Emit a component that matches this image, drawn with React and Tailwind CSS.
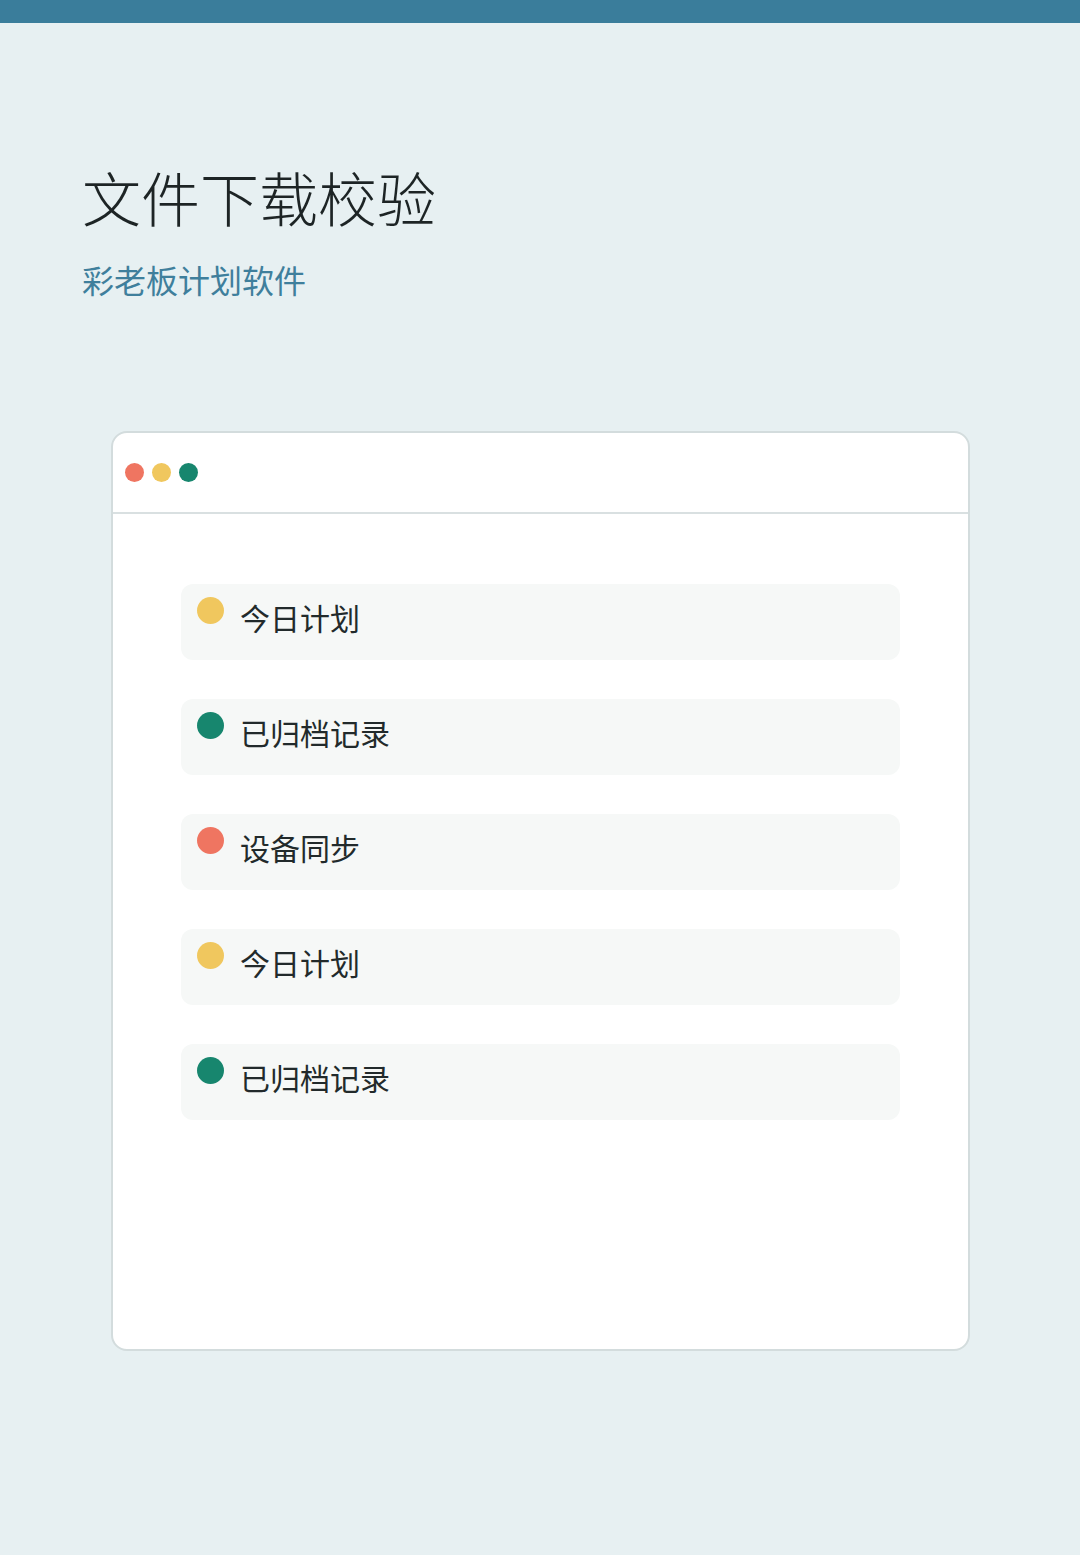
export default function App() {
  const items = [
    { c: "bg-[#f0c75e]", t: "今日计划" },
    { c: "bg-[#17866e]", t: "已归档记录" },
    { c: "bg-[#ef7561]", t: "设备同步" },
    { c: "bg-[#f0c75e]", t: "今日计划" },
    { c: "bg-[#17866e]", t: "已归档记录" },
  ];
  return (
    <div
      className="w-[1080px] h-[1555px] bg-[#e7f0f2] flex flex-col"
      style={{ fontFamily: '"Noto Sans CJK SC", "Noto Sans", sans-serif' }}
    >
      <div className="h-[23px] bg-[#3a7d9b] shrink-0" />
      <div className="pl-[82px] pt-[138px]">
        <h1 className="text-[59px] leading-[72px] text-[#1d2425] font-light m-0">文件下载校验</h1>
        <div className="mt-[22px] text-[32px] leading-[48px] text-[#3f7f9c]">彩老板计划软件</div>
      </div>
      <div className="ml-[111px] mt-[128px] w-[859px] h-[920px] bg-white border-2 border-[#d3dcdd] rounded-[16px] flex flex-col overflow-hidden">
        <div className="h-[81px] border-b-2 border-[#d9e0e1] flex items-center gap-[8px] pl-[12px] shrink-0">
          <span className="w-[19px] h-[19px] rounded-full bg-[#ef7561]" />
          <span className="w-[19px] h-[19px] rounded-full bg-[#f0c75e]" />
          <span className="w-[19px] h-[19px] rounded-full bg-[#17866e]" />
        </div>
        <div className="px-[68px] pt-[70px] flex flex-col gap-[39px]">
          {items.map((it, i) => (
            <div key={i} className="h-[76px] bg-[#f6f8f7] rounded-[12px] flex items-start pt-[13px] pl-[16px] gap-[16px]">
              <span className={`w-[27px] h-[27px] rounded-full shrink-0 ${it.c}`} />
              <span className="text-[30px] leading-[42px] text-[#222a2b] -mt-[1px]">{it.t}</span>
            </div>
          ))}
        </div>
      </div>
    </div>
  );
}
